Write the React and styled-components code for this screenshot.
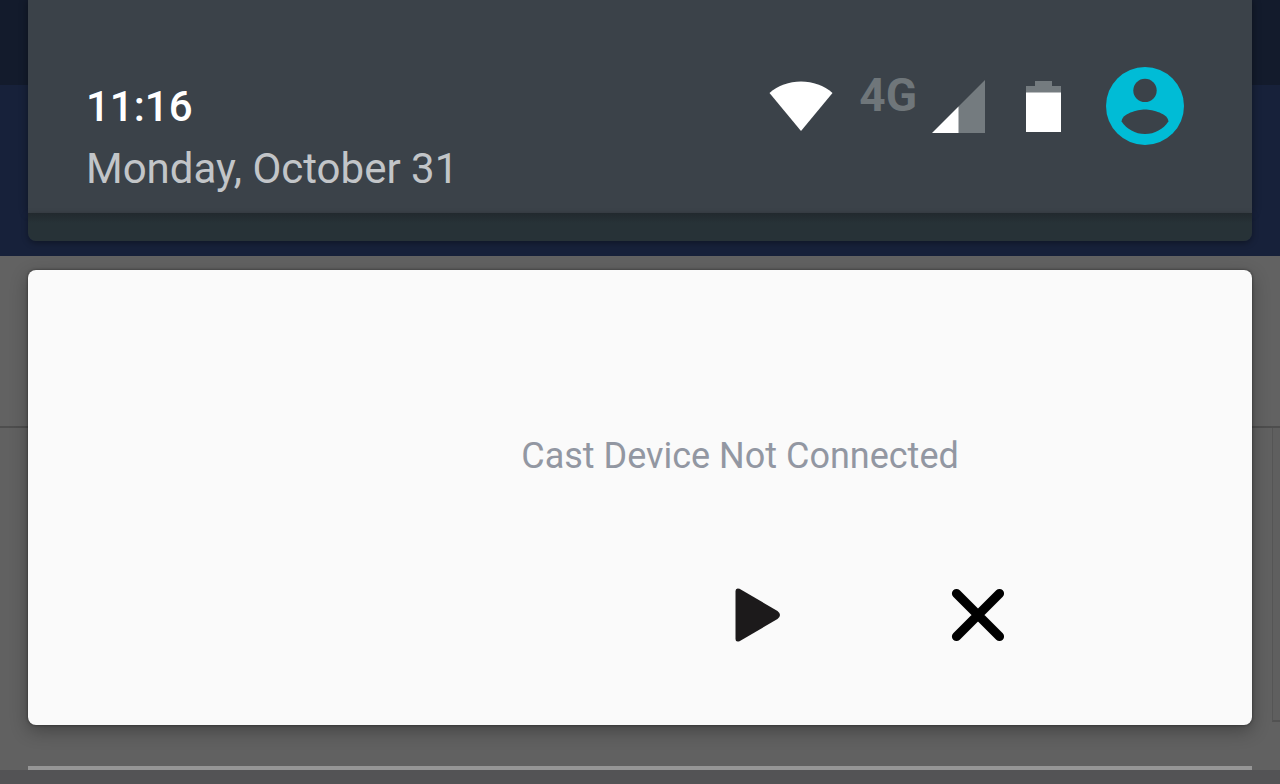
import React from 'react';
import styled, { createGlobalStyle } from 'styled-components';

const App = () => {
  return (
    <>
      <GlobalStyle />
      <Screen>
        <Backdrop aria-hidden='true'>
          <StatusArea />
          <Toolbar />
          <Banner />
          <Feed>
            <FeedCard />
          </Feed>
          <BottomBar />
        </Backdrop>
        <Shade>
          <Header>
            <Clock>
              <Time>11:16</Time>
              <DateText>Monday, October 31</DateText>
            </Clock>
            <StatusIcons>
              <WifiIcon />
              <Mobile>
                <Network>4G</Network>
                <SignalIcon />
              </Mobile>
              <BatteryIcon />
              <AvatarBtn type='button' aria-label='User'>
                <UserIcon />
              </AvatarBtn>
            </StatusIcons>
          </Header>
          <QuickPanel />
          <Notification>
            <Content>
              <Message>Cast Device Not Connected</Message>
              <Actions>
                <ActionBtn type='button' aria-label='Play'>
                  <PlayIcon />
                </ActionBtn>
                <ActionBtn type='button' aria-label='Close'>
                  <CloseIcon />
                </ActionBtn>
              </Actions>
            </Content>
          </Notification>
          <Divider />
        </Shade>
      </Screen>
    </>
  );
};

const WifiIcon = () => (
  <svg width='64' height='50' viewBox='0 0 64 50' fill='#fff'>
    <path d='M0.5 12C9 4.500 20 0.500 32 0.500S55 4.500 63.500 12L32 50z' />
  </svg>
);

const SignalIcon = () => (
  <svg width='53' height='53' viewBox='0 0 53 53'>
    <path d='M53 0V53H26V27z' fill='#747b7f' />
    <path d='M0 53L26.500 26.500V53z' fill='#fff' />
  </svg>
);

const BatteryIcon = () => (
  <svg width='35' height='51' viewBox='0 0 35 51'>
    <path d='M9 0H26V5H35V12H0V5H9z' fill='#747b7f' />
    <path d='M0 11.500H35V51H0z' fill='#fff' />
  </svg>
);

const UserIcon = () => (
  <svg width='78' height='78' viewBox='2 2 20 20'>
    <circle cx='12' cy='12' r='10' fill='#00bcd6' />
    <circle cx='12' cy='8' r='3' fill='#3b4249' />
    <path
      d='M12 19.200c-2.500 0-4.710-1.280-6-3.220.030-1.990 4-3.080 6-3.080 1.990 0 5.970 1.090 6 3.080-1.290 1.940-3.500 3.220-6 3.220z'
      fill='#3b4249'
    />
  </svg>
);

const PlayIcon = () => (
  <svg width='46' height='54' viewBox='0 0 46 54' fill='#1c1a1b'>
    <path d='M0.500 3Q0.500-0.500 4.500 0.800L42.500 23Q47.500 27 42.500 31L4.500 53.200Q0.500 54.500 0.500 51z' />
  </svg>
);

const CloseIcon = () => (
  <svg width='54' height='54' viewBox='0 0 54 54' fill='none'>
    <path
      d='M5.500 5.500L48.500 48.500M48.500 5.500L5.500 48.500'
      stroke='#000'
      strokeWidth='9.200'
      strokeLinecap='round'
    />
  </svg>
);

const GlobalStyle = createGlobalStyle`
  * {
    box-sizing: border-box;
  }
  body {
    margin: 0;
    background: #535355;
    font-family: Roboto, sans-serif;
  }
  svg {
    display: block;
    flex: none;
  }
  button {
    border: none;
    padding: 0;
    background: none;
    cursor: pointer;
  }
`;

const Screen = styled.div`
  display: grid;
  grid-template-columns: minmax(0, 1fr);
  min-height: 100vh;
`;

/* dimmed app that shows through behind the shade */
const Backdrop = styled.div`
  grid-area: 1 / 1;
  display: flex;
  flex-direction: column;
`;
const StatusArea = styled.div`
  height: 85px;
  background: #131b2c;
`;
const Toolbar = styled.div`
  height: 171px;
  background: #17213a;
`;
const Banner = styled.div`
  height: 172px;
  background: #626262;
  border-bottom: 2px solid #4e4e4e;
`;
const Feed = styled.div`
  flex: 1;
  display: flex;
  justify-content: flex-end;
  padding-bottom: 48px;
  background: #616161;
`;
const FeedCard = styled.div`
  width: 8px;
  background: #5f5f5f;
  border-left: 1px solid #555;
  border-bottom: 2px solid #525252;
`;
const BottomBar = styled.div`
  height: 14px;
  background: #535355;
`;

const Shade = styled.main`
  grid-area: 1 / 1;
  position: relative;
  padding: 0 28px;
`;
const Header = styled.header`
  display: flex;
  justify-content: space-between;
  align-items: flex-start;
  padding: 67px 68px 18px 58px;
  background: #3b4249;
  box-shadow: 0 0 8px rgba(0, 0, 0, 0.4);
`;
const Clock = styled.div`
  display: flex;
  flex-direction: column;
  gap: 10px;
  padding-top: 14px;
  line-height: 52px;
  font-size: 42px;
`;
const Time = styled.time`
  font-weight: 500;
  color: #fff;
`;
const DateText = styled.span`
  color: #c2c5c8;
`;
const StatusIcons = styled.div`
  display: flex;
  align-items: center;
  > :nth-child(2) {
    margin-left: 26px;
  }
  > :nth-child(3) {
    margin-left: 41px;
  }
  > :nth-child(4) {
    margin-left: 45px;
  }
`;
const Mobile = styled.div`
  display: flex;
  align-items: center;
  align-self: stretch;
  gap: 15px;
`;
const Network = styled.span`
  align-self: flex-start;
  line-height: 56px;
  font-size: 46px;
  font-weight: 700;
  color: #6f767a;
`;
const AvatarBtn = styled.button`
  border-radius: 50%;
`;
const QuickPanel = styled.div`
  height: 28px;
  background: linear-gradient(#22292e, #273237 10px);
  border-radius: 0 0 8px 8px;
  position: relative;
  box-shadow: 0 2px 6px rgba(0, 0, 0, 0.35);
`;

const Notification = styled.section`
  margin-top: 29px;
  padding: 162px 0 80px 200px;
  background: #fafafa;
  border-radius: 8px;
  box-shadow: 0 0 3px rgba(0, 0, 0, 0.5), 0 6px 18px rgba(0, 0, 0, 0.3);
`;
const Content = styled.div`
  display: flex;
  flex-direction: column;
  gap: 105px;
`;
const Message = styled.p`
  margin: 0;
  line-height: 48px;
  font-size: 36px;
  text-align: center;
  color: #9297a2;
`;
const Actions = styled.div`
  display: flex;
  justify-content: center;
  gap: 156px;
  padding-left: 256px;
`;
const ActionBtn = styled.button`
  display: flex;
  align-items: center;
  justify-content: center;
  width: 64px;
  height: 60px;
`;
const Divider = styled.div`
  height: 4px;
  margin-top: 41px;
  background: #969696;
`;

export default App;
